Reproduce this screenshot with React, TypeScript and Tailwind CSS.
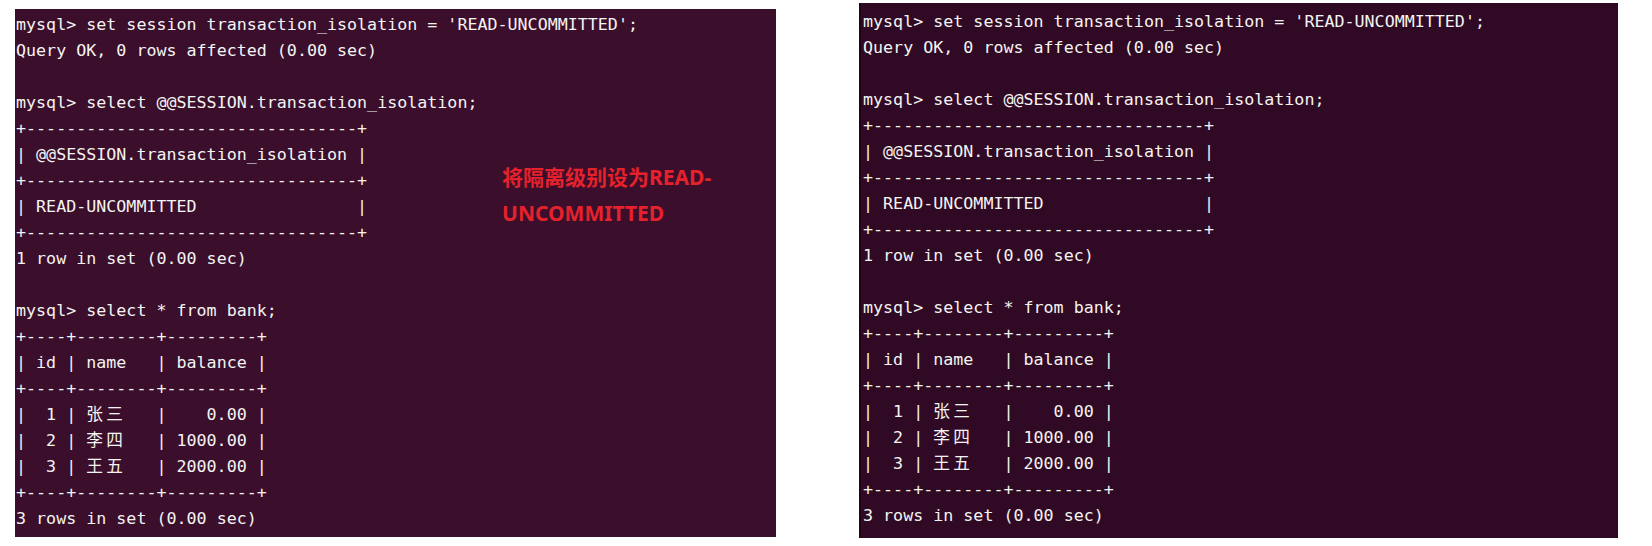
import React from "react";

const rule = "+" + "-".repeat(33) + "+";
const lines = [
  "mysql> set session transaction_isolation = 'READ-UNCOMMITTED';",
  "Query OK, 0 rows affected (0.00 sec)",
  "",
  "mysql> select @@SESSION.transaction_isolation;",
  rule,
  "| @@SESSION.transaction_isolation |",
  rule,
  "| " + "READ-UNCOMMITTED".padEnd(31) + " |",
  rule,
  "1 row in set (0.00 sec)",
  "",
  "mysql> select * from bank;",
  "+----+--------+---------+",
  "| id | name   | balance |",
  "+----+--------+---------+",
  "|  1 | 张三   |    0.00 |",
  "|  2 | 李四   | 1000.00 |",
  "|  3 | 王五   | 2000.00 |",
  "+----+--------+---------+",
  "3 rows in set (0.00 sec)",
];

// CJK glyphs take two terminal cells
function TermLine({ text }: { text: string }) {
  const parts = Array.from(text).map((ch, i) =>
    /[\u4e00-\u9fff]/.test(ch) ? (
      <span key={i} className="inline-block w-[2ch]">
        {ch}
      </span>
    ) : (
      ch
    )
  );
  return <div className="h-[26px] leading-[26px] whitespace-pre">{parts.length ? parts : " "}</div>;
}

function Terminal({ className, children }: { className: string; children?: React.ReactNode }) {
  return (
    <div
      className={`relative shrink-0 text-[#f4f4f2] text-[16.67px] font-['DejaVu_Sans_Mono','Noto_Sans_CJK_SC',monospace] ${className}`}
    >
      {lines.map((l, i) => (
        <TermLine key={i} text={l} />
      ))}
      {children}
    </div>
  );
}

export default function App() {
  return (
    <div className="w-[1652px] h-[546px] bg-white flex items-start overflow-hidden">
      <Terminal className="ml-[15px] mt-[9px] w-[761px] h-[528px] bg-[#3b0e2c] pl-[1px] pt-[3px]">
        <div className="absolute left-[487px] top-[150px] text-[21px] leading-[36px] font-bold text-[#e5222b] font-['Noto_Sans','Noto_Sans_CJK_SC',sans-serif] whitespace-nowrap">
          将隔离级别设为READ-
          <br />
          UNCOMMITTED
        </div>
      </Terminal>
      <Terminal className="ml-[83px] mt-[3px] w-[759px] h-[535px] bg-[#300a24] pl-[2px] pt-[6px] border-l-2 border-[#1e0616]" />
    </div>
  );
}
